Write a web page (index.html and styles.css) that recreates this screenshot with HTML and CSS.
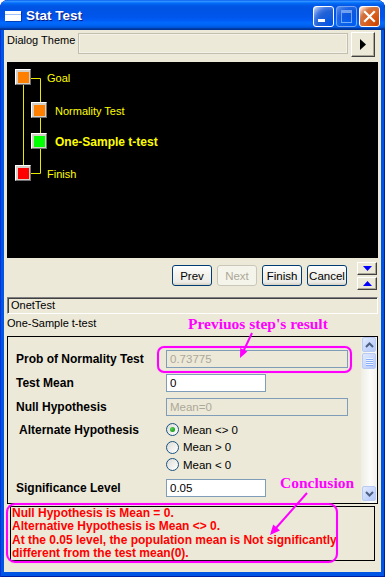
FILE: index.html
```html
<!DOCTYPE html>
<html>
<head>
<meta charset="utf-8">
<title>Stat Test</title>
<link rel="stylesheet" href="styles.css">
</head>
<body>
<div class="window">
  <div class="titlebar">
    <span class="ticon"></span>
    <span class="title">Stat Test</span>
    <div class="tbtns">
      <span class="tb min"><i></i></span>
      <span class="tb max"><i></i></span>
      <span class="tb close"><svg width="19" height="19" viewBox="0 0 19 19"><path d="M5 5 L14 14 M14 5 L5 14" stroke="#fff" stroke-width="2.2" stroke-linecap="square"/></svg></span>
    </div>
  </div>
  <div class="client">
    <div class="theme-row">
      <span class="lbl">Dialog Theme</span>
      <div class="theme-field"></div>
      <span class="classic-btn theme-btn"><svg width="7" height="11" viewBox="0 0 7 11"><path d="M0 0 L6 5.5 L0 11 Z" fill="#000"/></svg></span>
    </div>

    <div class="tree">
      <svg class="tree-lines" width="60" height="130" viewBox="0 0 60 130">
        <path d="M16.5 23 V103 M24 16.5 H33.5 V40 M33.5 56 V71 M33.5 87 V111.5 H24" stroke="#E8E800" stroke-width="1" fill="none"/>
      </svg>
      <div class="node n-goal"><span class="box"><i class="orange"></i></span><span class="ntext">Goal</span></div>
      <div class="node n-norm"><span class="box"><i class="orange"></i></span><span class="ntext">Normality Test</span></div>
      <div class="node n-one"><span class="box"><i class="green"></i></span><span class="ntext bold">One-Sample t-test</span></div>
      <div class="node n-fin"><span class="box"><i class="red"></i></span><span class="ntext">Finish</span></div>
    </div>

    <div class="nav-row">
      <span class="btn">Prev</span>
      <span class="btn disabled">Next</span>
      <span class="btn">Finish</span>
      <span class="btn">Cancel</span>
      <div class="updown">
        <span class="classic-btn ud"><svg width="9" height="5" viewBox="0 0 9 5"><path d="M0 0 H9 L4.5 5 Z" fill="#0000FF"/></svg></span>
        <span class="classic-btn ud"><svg width="9" height="5" viewBox="0 0 9 5"><path d="M0 5 H9 L4.5 0 Z" fill="#0000FF"/></svg></span>
      </div>
    </div>

    <div class="name-field">OnetTest</div>
    <div class="caption">One-Sample t-test</div>

    <div class="panel">
      <div class="form">
        <span class="flabel">Prob of Normality Test</span>
        <div class="field wide disabled">0.73775</div>
        <span class="flabel">Test Mean</span>
        <div class="field">0</div>
        <span class="flabel">Null Hypothesis</span>
        <div class="field wide disabled">Mean=0</div>
        <span class="flabel alt">Alternate Hypothesis</span>
        <div class="radios">
          <label class="radio"><span class="rcircle checked"></span>Mean &lt;&gt; 0</label>
          <label class="radio"><span class="rcircle"></span>Mean &gt; 0</label>
          <label class="radio"><span class="rcircle"></span>Mean &lt; 0</label>
        </div>
        <span class="flabel">Significance Level</span>
        <div class="field">0.05</div>
      </div>
      <div class="scrollbar">
        <span class="sb-btn"><svg width="9" height="6" viewBox="0 0 9 6"><path d="M1 5 L4.5 1.5 L8 5" stroke="#4D6185" stroke-width="2" fill="none"/></svg></span>
        <span class="sb-thumb"><i></i><i></i><i></i><i></i></span>
        <span class="sb-track"></span>
        <span class="sb-btn"><svg width="9" height="6" viewBox="0 0 9 6"><path d="M1 1 L4.5 4.5 L8 1" stroke="#4D6185" stroke-width="2" fill="none"/></svg></span>
      </div>
    </div>

    <div class="conclusion">
      <div>Null Hypothesis is Mean = 0.</div>
      <div>Alternative Hypothesis is Mean &lt;&gt; 0.</div>
      <div>At the 0.05 level, the population mean is Not significantly</div>
      <div>different from the test mean(0).</div>
    </div>
  </div>

  <div class="note note-prev">Previuos step's result</div>
  <div class="note note-concl">Conclusion</div>
  <div class="hl hl-prev"></div>
  <div class="hl hl-concl"></div>
  <svg class="arrows" width="385" height="577" viewBox="0 0 385 577">
    <path d="M252 333 L243.5 351" stroke="#FF00FF" stroke-width="2" fill="none"/>
    <path d="M240 358 L247.4 351.5 L240.2 348.1 Z" fill="#FF00FF"/>
    <path d="M307 493 L276 528" stroke="#FF00FF" stroke-width="2" fill="none"/>
    <path d="M270 535 L280 530.5 L273.2 524.5 Z" fill="#FF00FF"/>
  </svg>
</div>
</body>
</html>
```

FILE: styles.css
```css
html, body {
  margin: 0;
  padding: 0;
  background: #fff;
}
body {
  font-family: "Liberation Sans", Arial, sans-serif;
  font-size: 11px;
  color: #000;
}
.window {
  position: relative;
  width: 385px;
  height: 577px;
  box-sizing: border-box;
  background: #0055E5;
  border-radius: 8px 8px 0 0;
  display: flex;
  flex-direction: column;
  padding: 0 4px 5px 4px;
  box-shadow: inset 1px 0 #0831D9, inset -1px 0 #001EA0, inset 0 -1px #001EA0;
  overflow: hidden;
}
.titlebar {
  height: 30px;
  margin: 0 -4px;
  flex: none;
  display: flex;
  align-items: center;
  border-radius: 8px 8px 0 0;
  background: linear-gradient(to bottom, #0058EE 0%, #3593FF 4%, #288EFF 6%, #127DFF 8%, #036FFC 10%, #0262EE 14%, #0057E5 20%, #0054E3 24%, #0055EB 56%, #005BF5 66%, #026AFE 76%, #0062EF 86%, #0052D6 92%, #0040AB 94%, #003092 100%);
}
.ticon {
  width: 16px;
  height: 10px;
  margin-left: 5px;
  margin-top: 1px;
  box-sizing: border-box;
  background: #fff;
  border-top: 3px solid #fff;
  box-shadow: inset 0 1px #9CC0F8, 1px 1px 0 rgba(0,0,60,0.35);
}
.title {
  margin-left: 5px;
  color: #fff;
  font-weight: bold;
  font-size: 13.5px;
  text-shadow: 1px 1px #0A1883;
}
.tbtns {
  margin-left: auto;
  margin-right: 5px;
  display: flex;
  gap: 2px;
  margin-top: 2px;
}
.tb {
  width: 21px;
  height: 21px;
  box-sizing: border-box;
  border: 1px solid #fff;
  border-radius: 3px;
  position: relative;
  display: flex;
  align-items: center;
  justify-content: center;
}
.tb.min, .tb.max {
  background: radial-gradient(circle at 90% 90%, #0054E9 0%, #2263D5 55%, #4479E4 70%, #A3BBEC 90%, #fff 100%);
}
.tb.max {
  opacity: 0.45;
}
.tb.min i {
  position: absolute;
  left: 4px;
  bottom: 4px;
  width: 7px;
  height: 3px;
  background: #fff;
}
.tb.max i {
  width: 9px;
  height: 9px;
  border: 1px solid #fff;
  border-top-width: 3px;
}
.tb.close {
  background: radial-gradient(circle at 90% 90%, #CC4600 0%, #DC6527 55%, #CD7546 70%, #FFCCB2 90%, #fff 100%);
}

.client {
  flex: 1;
  background: #ECE9D8;
  display: flex;
  flex-direction: column;
  padding: 0 3px;
}

.theme-row {
  margin-top: 2px;
  height: 25px;
  display: flex;
  align-items: flex-start;
  flex: none;
}
.theme-row .lbl {
  margin-top: 2px;
  width: 71px;
}
.theme-field {
  width: 270px;
  height: 21px;
  margin-top: 1px;
  box-sizing: border-box;
  border: 1px solid #C2BFAE;
  box-shadow: inset 0 0 0 1px #F3F2EA;
  background: #ECE9D8;
}
.classic-btn {
  box-sizing: border-box;
  background: #ECE9D8;
  border: 1px solid;
  border-color: #fff #404040 #404040 #fff;
  box-shadow: inset -1px -1px #ACA899;
  display: flex;
  align-items: center;
  justify-content: center;
}
.theme-btn {
  width: 24px;
  height: 25px;
  margin-left: 3px;
}

.tree {
  position: relative;
  margin-top: 5px;
  height: 196px;
  flex: none;
  background: #000;
  display: flex;
  flex-direction: column;
  align-items: flex-start;
}
.tree-lines {
  position: absolute;
  left: 0;
  top: 0;
}
.node {
  position: relative;
  display: flex;
  align-items: center;
  height: 16px;
  color: #FFFF00;
}
.n-goal { margin-top: 7px; margin-left: 8px; }
.n-norm { margin-top: 17px; margin-left: 24px; }
.n-one { margin-top: 15px; margin-left: 24px; }
.n-fin { margin-top: 16px; margin-left: 8px; }
.box {
  width: 16px;
  height: 16px;
  box-sizing: border-box;
  border: 1px solid;
  border-color: #fff #6E6E6E #6E6E6E #fff;
  background: #D4D0C8;
  padding: 2px 1px 1px 2px;
  flex: none;
}
.box i {
  display: block;
  width: 100%;
  height: 100%;
}
.box i.orange { background: #FF8000; }
.box i.green { background: #00FF00; }
.box i.red { background: #FF0000; }
.ntext { margin-left: 8px; margin-top: 1px; }
.n-goal .ntext, .n-fin .ntext { margin-left: 16px; }
.ntext.bold { font-weight: bold; font-size: 12px; }

.nav-row {
  margin-top: 4px;
  height: 27px;
  display: flex;
  align-items: flex-start;
  justify-content: flex-end;
  padding-right: 1px;
  flex: none;
}
.btn {
  width: 40px;
  height: 21px;
  margin-top: 3px;
  margin-left: 5px;
  box-sizing: border-box;
  border: 1px solid #003C74;
  border-radius: 3px;
  background: linear-gradient(#FFFFFF 0%, #F4F3EE 40%, #ECEBE6 85%, #D6D0C5 100%);
  display: flex;
  align-items: center;
  justify-content: center;
  font-size: 11.5px;
}
.btn.disabled {
  border-color: #C9C7BA;
  background: #F5F4EA;
  color: #ACA899;
}
.updown {
  margin-left: 10px;
  display: flex;
  flex-direction: column;
  gap: 2px;
}
.ud {
  width: 20px;
  height: 13px;
}

.name-field {
  margin-top: 8px;
  height: 17px;
  box-sizing: border-box;
  border: 1px solid;
  border-color: #808080 #fff #fff #808080;
  box-shadow: inset 1px 1px #404040;
  padding-left: 3px;
  line-height: 15px;
  flex: none;
}
.caption {
  margin-top: 2px;
  line-height: 14px;
  flex: none;
}

.panel {
  margin-top: 6px;
  height: 168px;
  flex: none;
  box-sizing: border-box;
  border: 1px solid #000;
  display: flex;
}
.form {
  flex: 1;
  display: grid;
  grid-template-columns: 150px 1fr;
  grid-template-rows: 18px 18px 18px 51px 18px;
  row-gap: 6px;
  padding: 13px 0 0 8px;
  align-items: start;
}
.flabel {
  font-weight: bold;
  font-size: 12px;
  line-height: 18px;
}
.flabel.alt { margin-left: 3px; line-height: 16px; }
.field {
  width: 100px;
  height: 18px;
  box-sizing: border-box;
  border: 1px solid #7F9DB9;
  background: #fff;
  padding-left: 3px;
  line-height: 16px;
  font-size: 11.5px;
}
.field.wide { width: 182px; }
.field.disabled { background: #ECE9D8; color: #ACA899; }
.radios {
  display: flex;
  flex-direction: column;
  margin-top: -1px;
}
.radio {
  height: 17.5px;
  display: flex;
  align-items: center;
  font-size: 11.5px;
}
.rcircle {
  width: 13px;
  height: 13px;
  box-sizing: border-box;
  border: 1px solid #1C5180;
  border-radius: 50%;
  background: linear-gradient(135deg, #DCDCD7, #fff);
  margin-right: 4px;
  display: flex;
  align-items: center;
  justify-content: center;
}
.rcircle.checked::after {
  content: "";
  width: 5px;
  height: 5px;
  border-radius: 50%;
  background: radial-gradient(circle at 35% 35%, #55D551, #21A121 60%, #1A8C1A);
}
.scrollbar {
  width: 16px;
  display: flex;
  flex-direction: column;
  background: linear-gradient(to right, #EEEDE5, #FCFCFA 60%, #F3F1EC);
  padding: 0 0 1px 0;
}
.sb-btn, .sb-thumb {
  height: 15px;
  margin: 0 1px 1px 1px;
  box-sizing: border-box;
  border: 1px solid #B8CBF3;
  border-radius: 2px;
  background: linear-gradient(135deg, #E1EAFE, #C5D5FC 60%, #B5C8F7);
  display: flex;
  align-items: center;
  justify-content: center;
}
.sb-thumb {
  height: 16px;
  flex-direction: column;
  gap: 1px;
}
.sb-thumb i {
  display: block;
  width: 7px;
  height: 1px;
  background: #EEF4FE;
  box-shadow: 0 1px #8CB0F8;
}
.sb-track { flex: 1; }

.conclusion {
  margin: 2px 3px 0 3px;
  height: 55px;
  flex: none;
  box-sizing: border-box;
  border: 1px solid #000;
  padding: 0 0 0 1px;
  color: #FF0000;
  font-weight: bold;
  font-size: 12px;
  line-height: 13.3px;
}

.note {
  position: absolute;
  font-family: "Liberation Serif", "Times New Roman", serif;
  font-weight: bold;
  font-size: 15.5px;
  color: #FF00FF;
  white-space: nowrap;
}
.note-prev { left: 188px; top: 315px; }
.note-concl { left: 280px; top: 474px; }
.hl {
  position: absolute;
  border: 2px solid #FF00FF;
  border-radius: 7px;
  box-shadow: 0 0 1px #FF66FF, inset 0 0 1px #FF66FF;
}
.hl-prev { left: 157px; top: 346px; width: 191px; height: 23px; }
.hl-concl { left: 6px; top: 503px; width: 328px; height: 56px; border-radius: 9px; }
.arrows {
  position: absolute;
  left: 0;
  top: 0;
  pointer-events: none;
}
```
